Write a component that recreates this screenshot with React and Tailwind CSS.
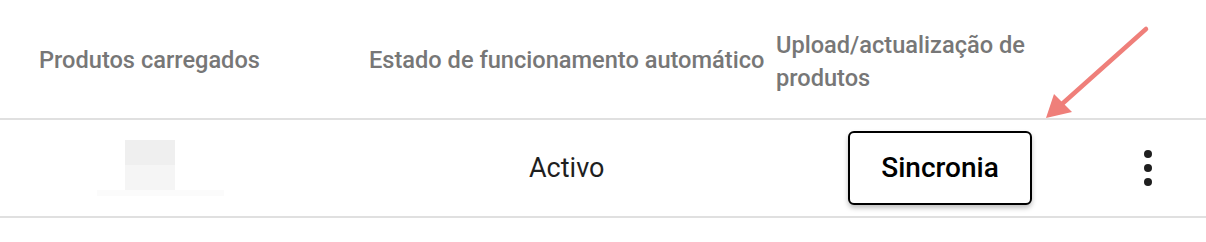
export default function App() {
  return (
    <div className="relative w-[1206px] h-[242px] bg-white" style={{ fontFamily: "Roboto, 'Liberation Sans', sans-serif" }}>
      <div className="flex h-[118px] items-center text-[23.6px] font-medium text-[#777777]">
        <div className="w-[354px] pl-[39px] pt-[3px]">Produtos carregados</div>
        <div className="w-[406px] pl-[15px] pt-[3px] whitespace-nowrap">Estado de funcionamento automático</div>
        <div className="w-[300px] pl-[16px] leading-[33px] pt-[6px]">Upload/actualização de produtos</div>
      </div>
      <div className="h-[2px] bg-[#e0e0e0]" />
      <div className="flex h-[96px] items-center">
        <div className="w-[354px] pl-[97px] flex flex-col">
          <div className="ml-[28px] w-[50px] h-[25px] bg-[#efefef]" />
          <div className="ml-[28px] w-[50px] h-[25px] bg-[#f5f5f5]" />
          <div className="w-[127px] h-[6px] bg-[#fbfbfb]" />
        </div>
        <div className="w-[406px] pl-[175px] text-[27px] text-[#1f1f1f]">Activo</div>
        <div className="w-[382px] pl-[88px]">
          <button className="w-[184px] h-[74px] border-2 border-black rounded-[6px] bg-white shadow-[0_3px_5px_rgba(0,0,0,0.25)] text-[28px] font-medium text-black">
            Sincronia
          </button>
        </div>
        <div className="flex flex-col gap-[6px] ml-[2px]">
          <span className="w-[8px] h-[8px] rounded-full bg-[#1f1f1f]" />
          <span className="w-[8px] h-[8px] rounded-full bg-[#1f1f1f]" />
          <span className="w-[8px] h-[8px] rounded-full bg-[#1f1f1f]" />
        </div>
      </div>
      <div className="h-[2px] bg-[#e0e0e0]" />
      <svg className="absolute left-0 top-0 pointer-events-none" width="1206" height="242">
        <line x1="1146" y1="29" x2="1062" y2="104" stroke="#ef7f7a" strokeWidth="4.5" strokeLinecap="round" />
        <polygon points="1046,118 1054,94 1072,112" fill="#ef7f7a" />
      </svg>
    </div>
  );
}
